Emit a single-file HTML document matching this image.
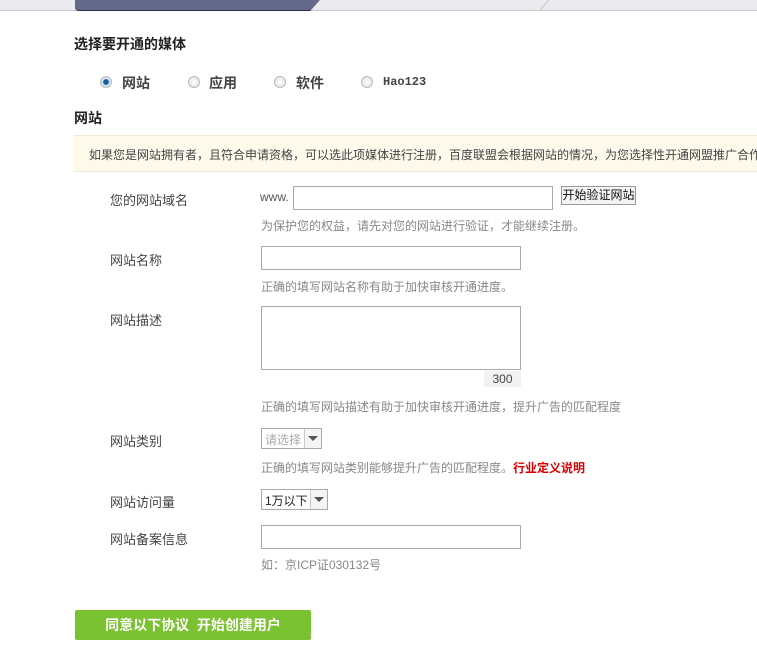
<!DOCTYPE html>
<html><head><meta charset="utf-8"><style>
body{margin:0;width:757px;height:660px;overflow:hidden;background:#fff;font-family:"Liberation Sans","Noto Sans CJK SC",sans-serif;font-size:12px;color:#333;position:relative}
.a{position:absolute}
.lbl{position:absolute;left:110px;font-size:13px;color:#444}
.tip{position:absolute;left:261px;font-size:12px;color:#888}
.inp{position:absolute;left:261px;border:1px solid #aaa;background:#fff;box-sizing:border-box}
.rad{position:absolute;width:10px;height:10px;border-radius:50%;border:1px solid #bbb;background:radial-gradient(#fff,#ddd)}
.sel{position:absolute;border:1px solid #aaa;box-sizing:border-box;height:21px;background:#fff}
.sel .ar{position:absolute;right:0;top:0;width:16px;height:19px;border-left:1px solid #ccc;background:#f4f4f4}
.sel .ar:after{content:"";position:absolute;left:3px;top:7px;border:5px solid transparent;border-top:5px solid #555;border-bottom:0}
</style></head><body>
<div class="a" style="left:0;top:0;width:757px;height:10px;background:#ebebef;border-bottom:1px solid #c8c8d0"></div>
<div class="a" style="left:75px;top:0;width:245px;height:10px;background:#656a8a;border-bottom:1px solid #2a2c3c;border-radius:0 0 0 4px;clip-path:polygon(0 0,100% 0,96% 100%,0 100%)"></div>
<div class="a" style="left:544px;top:0;width:1px;height:10px;background:#bbb;transform:skewX(-40deg)"></div>

<div class="a" style="left:74px;top:34px;font-size:14px;font-weight:bold;color:#222">选择要开通的媒体</div>
<div class="rad" style="left:100px;top:76px;background:radial-gradient(#1b5a9c 35%,#cfe0f0 45%)"></div>
<div class="a" style="left:122px;top:73px;font-size:14px;font-weight:bold;color:#444">网站</div>
<div class="rad" style="left:188px;top:76px"></div>
<div class="a" style="left:209px;top:73px;font-size:14px;font-weight:bold;color:#444">应用</div>
<div class="rad" style="left:274px;top:76px"></div>
<div class="a" style="left:296px;top:73px;font-size:14px;font-weight:bold;color:#444">软件</div>
<div class="rad" style="left:361px;top:76px"></div>
<div class="a" style="left:383px;top:75px;font-size:12px;font-weight:bold;color:#444;font-family:'Liberation Mono',monospace">Hao123</div>

<div class="a" style="left:74px;top:108px;font-size:14px;font-weight:bold;color:#222">网站</div>
<div class="a" style="left:74px;top:135px;width:700px;height:35px;background:#fefaeb;border-top:1px solid #f3ead0;border-bottom:1px solid #f3ead0"></div>
<div class="a" style="left:89px;top:146px;font-size:12px;color:#444;white-space:nowrap">如果您是网站拥有者，且符合申请资格，可以选此项媒体进行注册，百度联盟会根据网站的情况，为您选择性开通网盟推广合作</div>

<div class="lbl" style="top:190px">您的网站域名</div>
<div class="a" style="left:260px;top:190px;color:#555">www.</div>
<div class="inp" style="left:293px;top:186px;width:260px;height:24px"></div>
<div class="a" style="left:561px;top:186px;width:73px;height:17px;border:1px solid #999;background:#f4f4f4;font-size:12px;color:#111;line-height:17px;text-align:center">开始验证网站</div>
<div class="tip" style="top:217px">为保护您的权益，请先对您的网站进行验证，才能继续注册。</div>

<div class="lbl" style="top:250px">网站名称</div>
<div class="inp" style="top:246px;width:260px;height:24px"></div>
<div class="tip" style="top:278px">正确的填写网站名称有助于加快审核开通进度。</div>

<div class="lbl" style="top:310px">网站描述</div>
<div class="inp" style="top:306px;width:260px;height:64px"></div>
<div class="a" style="left:484px;top:371px;width:37px;height:16px;background:#f2f2f2;color:#444;text-align:center;line-height:16px">300</div>
<div class="tip" style="top:398px">正确的填写网站描述有助于加快审核开通进度，提升广告的匹配程度</div>

<div class="lbl" style="top:431px">网站类别</div>
<div class="sel" style="left:261px;top:428px;width:61px"><span class="a" style="left:3px;top:2px;color:#aaa">请选择</span><div class="ar"></div></div>
<div class="tip" style="top:459px">正确的填写网站类别能够提升广告的匹配程度。<b style="color:#d00">行业定义说明</b></div>

<div class="lbl" style="top:492px">网站访问量</div>
<div class="sel" style="left:261px;top:489px;width:67px"><span class="a" style="left:3px;top:2px;color:#222">1万以下</span><div class="ar"></div></div>

<div class="lbl" style="top:529px">网站备案信息</div>
<div class="inp" style="top:525px;width:260px;height:24px"></div>
<div class="tip" style="top:556px">如：京ICP证030132号</div>

<div class="a" style="left:75px;top:610px;width:236px;height:30px;background:#7bc232;border-radius:2px;color:#fff;font-size:14px;font-weight:bold;line-height:30px;text-align:center">同意以下协议&nbsp;&nbsp;开始创建用户</div>
</body></html>
